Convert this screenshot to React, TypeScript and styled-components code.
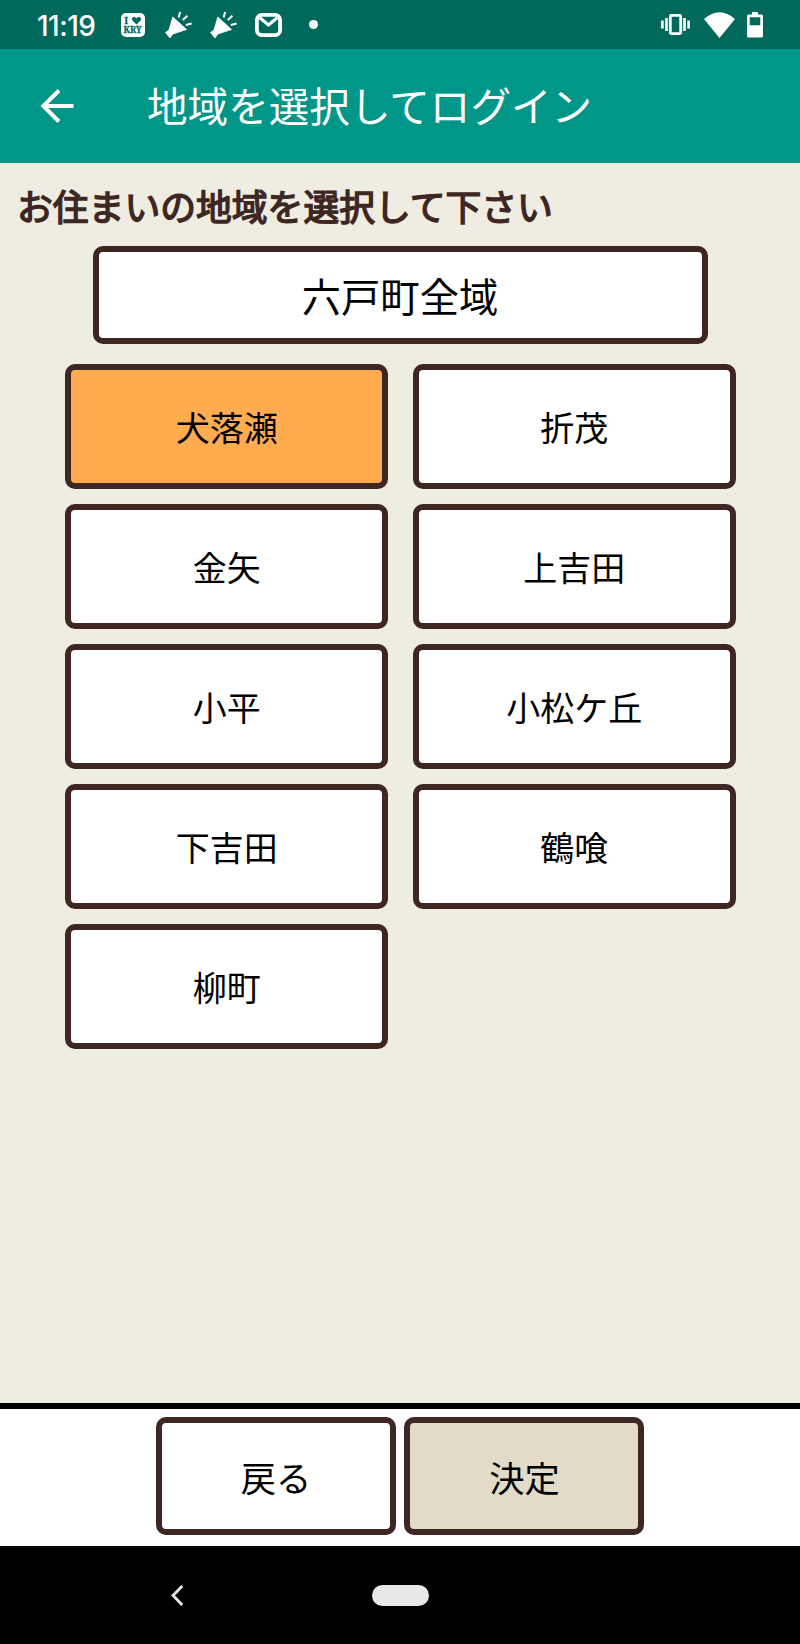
import React, { useState } from 'react';
import styled, { createGlobalStyle } from 'styled-components';

const GlobalStyle = createGlobalStyle`
  *, *::before, *::after { box-sizing: border-box; }
  body {
    margin: 0;
    background: #efede1;
    font-family: "Noto Sans CJK JP", sans-serif;
  }
`;

const Screen = styled.div`
  width: 800px;
  height: 1644px;
  display: flex;
  flex-direction: column;
  overflow: hidden;
`;

const StatusBar = styled.div`
  height: 49px;
  flex: none;
  padding: 0 37px 0 37px;
  display: flex;
  align-items: center;
  justify-content: space-between;
  background: #00695c;
  color: #fff;
  svg { display: block; flex: none; }
`;

const Notifications = styled.div`
  display: flex;
  align-items: center;
`;

const Clock = styled.span`
  width: 84px;
  padding-top: 2px;
  font: 500 28px/30px Inter, sans-serif;
  letter-spacing: -0.5px;
`;

const SmallIcon = styled.svg<{ $gap: number }>`
  margin-right: ${p => p.$gap}px;
`;

const SystemIcons = styled.div`
  display: flex;
  align-items: center;
`;

const AppBar = styled.header`
  height: 114px;
  flex: none;
  padding-left: 40px;
  display: flex;
  align-items: center;
  background: #009688;
  color: #fff;
`;

const BackArrow = styled.svg`
  display: block;
  margin-right: 73px;
`;

const Title = styled.h1`
  margin: 0;
  padding-bottom: 2px;
  font-size: 40.6px;
  font-weight: 400;
  line-height: 60px;
  white-space: nowrap;
`;

const Content = styled.main`
  flex: 1;
  display: flex;
  flex-direction: column;
  align-items: center;
`;

const Prompt = styled.h2`
  align-self: stretch;
  margin: 0;
  padding: 16px 0 0 17px;
  height: 83px;
  color: #3e2723;
  font-size: 35.8px;
  font-weight: 400;
  -webkit-text-stroke: 1.5px #3e2723;
  line-height: 52px;
  white-space: nowrap;
`;

const OutlinedButton = styled.button<{ $fill?: string }>`
  margin: 0;
  padding: 0;
  display: flex;
  align-items: center;
  justify-content: center;
  border: 6px solid #3e2723;
  border-radius: 10px;
  background: ${p => p.$fill ?? '#fff'};
  color: #000;
  font-family: inherit;
  line-height: 1.4;
`;

const WholeTownButton = styled(OutlinedButton)`
  width: 615px;
  height: 98px;
  font-size: 39.3px;
`;

const AreaGrid = styled.div`
  margin-top: 20.4px;
  padding-left: 1px;
  display: grid;
  grid-template-columns: repeat(2, 323px);
  column-gap: 24.5px;
  row-gap: 15.5px;
`;

const AreaButton = styled(OutlinedButton)`
  height: 124.5px;
  font-size: 34px;
`;

const ActionBar = styled.footer`
  height: 143.5px;
  flex: none;
  padding: 8px 0 0 0.6px;
  display: flex;
  justify-content: center;
  align-items: flex-start;
  gap: 8.4px;
  border-top: 6px solid #000;
  background: #fff;
`;

const ActionButton = styled(OutlinedButton)`
  width: 240px;
  height: 118px;
  padding-top: 2px;
  font-size: 35.3px;
`;

const NavigationBar = styled.nav`
  height: 98px;
  flex: none;
  padding-left: 170px;
  display: flex;
  align-items: center;
  background: #000;
`;

const HomePill = styled.span`
  width: 57px;
  height: 21px;
  margin-left: 188px;
  border-radius: 11px;
  background: #e8e8e8;
`;

function HornIcon() {
  return (
    <SmallIcon $gap={18} width="27" height="28" viewBox="0 0 27 28">
      <path d="M7.8 6 L21.5 18.5 L7.8 23 L5 27 L0.5 21.5 L4 19Z" fill="#fff" stroke="#fff" strokeWidth=".8" strokeLinejoin="round" />
      <path d="M13.6 6.5 L15.2 1 M17.8 9 L22.4 4.8 M20.8 14 L26.6 12.5" stroke="#fff" strokeWidth="2" />
    </SmallIcon>
  );
}

const areas = ['犬落瀬', '折茂', '金矢', '上吉田', '小平', '小松ケ丘', '下吉田', '鶴喰', '柳町'];

export default function App() {
  const [selected, setSelected] = useState('犬落瀬');
  return (
    <Screen>
      <GlobalStyle />
      <StatusBar>
        <Notifications>
          <Clock>11:19</Clock>
          <SmallIcon $gap={20} width="24" height="24" viewBox="0 0 24 24">
            <rect width="24" height="24" rx="5" fill="#fff" />
            <text x="3.3" y="11" fontFamily="Liberation Serif, serif" fontWeight="700" fontSize="10" fill="#00695c" stroke="#00695c" strokeWidth=".3">I</text>
            <path d="M15.5 11.5 L11.2 7.3 C9.8 4.2 13.4 2.6 15.5 5.2 C17.6 2.6 21.2 4.2 19.8 7.3Z" fill="#00695c" />
            <text x="2.8" y="20" fontFamily="Liberation Serif, serif" fontWeight="700" fontSize="9.3" textLength="18" lengthAdjust="spacingAndGlyphs" fill="#00695c" stroke="#00695c" strokeWidth=".4">KRY</text>
          </SmallIcon>
          <HornIcon />
          <HornIcon />
          <SmallIcon $gap={27} width="27" height="24" viewBox="0 0 27 24">
            <rect x="1.9" y="1.9" width="23.2" height="20.2" rx="5" fill="none" stroke="#fff" strokeWidth="3.8" />
            <path d="M4.5 4.5 L13.5 12 L22.5 4.5" fill="none" stroke="#fff" strokeWidth="3.2" />
          </SmallIcon>
          <svg width="9" height="9" viewBox="0 0 9 9"><circle cx="4.5" cy="4.5" r="4.5" fill="#fff" /></svg>
        </Notifications>
        <SystemIcons>
          <SmallIcon $gap={14} width="29" height="21" viewBox="0 0 29 21">
            <rect x="9.3" y="1.4" width="10.4" height="18.2" rx="1" fill="none" stroke="#fff" strokeWidth="2.8" />
            <path d="M5.5 4V17 M1.4 6.5V14.5 M23.5 4V17 M27.6 6.5V14.5" stroke="#fff" strokeWidth="2.6" />
          </SmallIcon>
          <SmallIcon $gap={12} width="31" height="26" viewBox="0 0 31 26">
            <path d="M0 7 Q15.5 -6.5 31 7 L15.5 26Z" fill="#fff" />
          </SmallIcon>
          <svg width="16" height="26" viewBox="0 0 16 26">
            <path fillRule="evenodd" d="M5 0H11V2.5H14.5Q16 2.5 16 4V24Q16 25.5 14.5 25.5H1.5Q0 25.5 0 24V4Q0 2.5 1.5 2.5H5Z M2.7 5.2V13.2H13.3V5.2Z" fill="#fff" />
          </svg>
        </SystemIcons>
      </StatusBar>
      <AppBar>
        <BackArrow width="34" height="34" viewBox="0 0 34 34">
          <path d="M33.5 17H3 M19 1.5 L3.3 17 L19 32.5" fill="none" stroke="#fff" strokeWidth="4" />
        </BackArrow>
        <Title>地域を選択してログイン</Title>
      </AppBar>
      <Content>
        <Prompt>お住まいの地域を選択して下さい</Prompt>
        <WholeTownButton onClick={() => setSelected('')}>六戸町全域</WholeTownButton>
        <AreaGrid>
          {areas.map(area => (
            <AreaButton key={area} $fill={area === selected ? '#ffab4f' : undefined} onClick={() => setSelected(area)}>
              {area}
            </AreaButton>
          ))}
        </AreaGrid>
      </Content>
      <ActionBar>
        <ActionButton>戻る</ActionButton>
        <ActionButton $fill="#e1dbc8">決定</ActionButton>
      </ActionBar>
      <NavigationBar>
        <svg width="14" height="21" viewBox="0 0 14 21">
          <path d="M12.3 1 L3 10.5 L12.3 20" fill="none" stroke="#e8e8e8" strokeWidth="2.8" />
        </svg>
        <HomePill />
      </NavigationBar>
    </Screen>
  );
}
